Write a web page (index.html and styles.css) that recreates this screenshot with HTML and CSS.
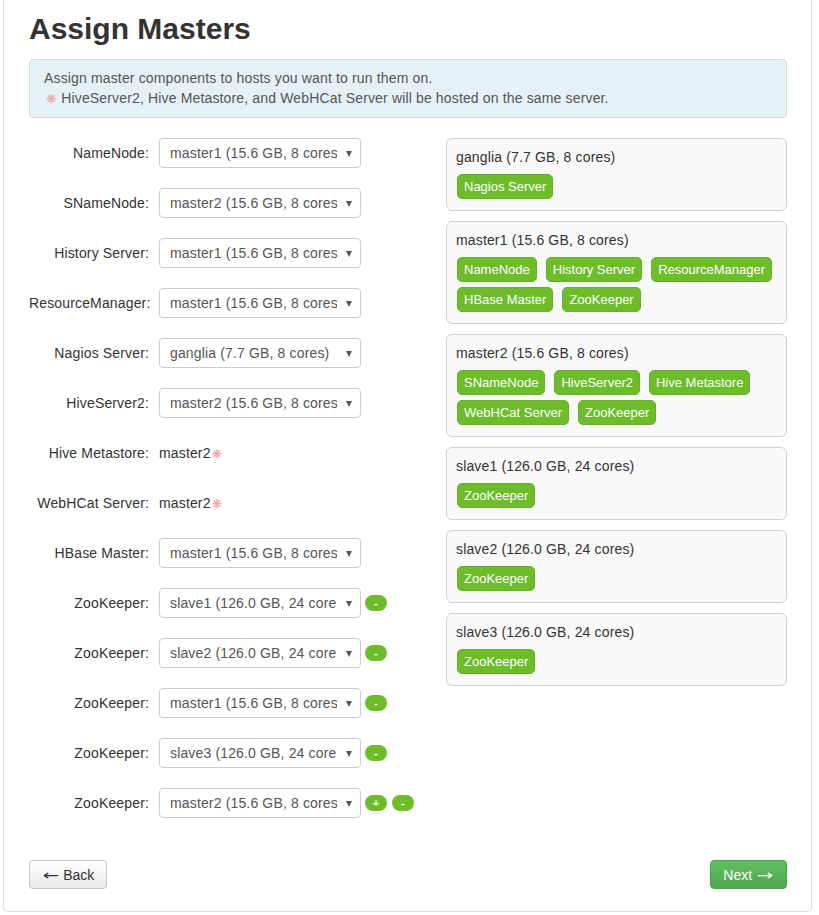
FILE: index.html
```html
<!DOCTYPE html>
<html>
<head>
<meta charset="utf-8">
<title>Assign Masters</title>
<link rel="stylesheet" href="styles.css">
</head>
<body>
<div class="panel">
  <h1 class="title">Assign Masters</h1>
  <div class="alert">
    <div>Assign master components to hosts you want to run them on.</div>
    <div><span class="star">❋</span> HiveServer2, Hive Metastore, and WebHCat Server will be hosted on the same server.</div>
  </div>

  <div class="layout">
    <div class="form">
      <div class="row"><div class="label">NameNode:</div><div class="select"><span class="select-text">master1 (15.6 GB, 8 cores)</span></div></div>
      <div class="row"><div class="label">SNameNode:</div><div class="select"><span class="select-text">master2 (15.6 GB, 8 cores)</span></div></div>
      <div class="row"><div class="label">History Server:</div><div class="select"><span class="select-text">master1 (15.6 GB, 8 cores)</span></div></div>
      <div class="row"><div class="label">ResourceManager:</div><div class="select"><span class="select-text">master1 (15.6 GB, 8 cores)</span></div></div>
      <div class="row"><div class="label">Nagios Server:</div><div class="select"><span class="select-text">ganglia (7.7 GB, 8 cores)</span></div></div>
      <div class="row"><div class="label">HiveServer2:</div><div class="select"><span class="select-text">master2 (15.6 GB, 8 cores)</span></div></div>
      <div class="row"><div class="label">Hive Metastore:</div><div class="static">master2<span class="star">❋</span></div></div>
      <div class="row"><div class="label">WebHCat Server:</div><div class="static">master2<span class="star">❋</span></div></div>
      <div class="row"><div class="label">HBase Master:</div><div class="select"><span class="select-text">master1 (15.6 GB, 8 cores)</span></div></div>
      <div class="row"><div class="label">ZooKeeper:</div><div class="select"><span class="select-text">slave1 (126.0 GB, 24 cores)</span></div><span class="pill">-</span></div>
      <div class="row"><div class="label">ZooKeeper:</div><div class="select"><span class="select-text">slave2 (126.0 GB, 24 cores)</span></div><span class="pill">-</span></div>
      <div class="row"><div class="label">ZooKeeper:</div><div class="select"><span class="select-text">master1 (15.6 GB, 8 cores)</span></div><span class="pill">-</span></div>
      <div class="row"><div class="label">ZooKeeper:</div><div class="select"><span class="select-text">slave3 (126.0 GB, 24 cores)</span></div><span class="pill">-</span></div>
      <div class="row"><div class="label">ZooKeeper:</div><div class="select"><span class="select-text">master2 (15.6 GB, 8 cores)</span></div><span class="pill">+</span><span class="pill">-</span></div>
    </div>

    <div class="hosts">
      <div class="host">
        <div class="host-name">ganglia (7.7 GB, 8 cores)</div>
        <div class="badges"><span class="badge">Nagios Server</span></div>
      </div>
      <div class="host">
        <div class="host-name">master1 (15.6 GB, 8 cores)</div>
        <div class="badges"><span class="badge">NameNode</span><span class="badge">History Server</span><span class="badge">ResourceManager</span><span class="badge">HBase Master</span><span class="badge">ZooKeeper</span></div>
      </div>
      <div class="host">
        <div class="host-name">master2 (15.6 GB, 8 cores)</div>
        <div class="badges"><span class="badge">SNameNode</span><span class="badge">HiveServer2</span><span class="badge">Hive Metastore</span><span class="badge">WebHCat Server</span><span class="badge">ZooKeeper</span></div>
      </div>
      <div class="host">
        <div class="host-name">slave1 (126.0 GB, 24 cores)</div>
        <div class="badges"><span class="badge">ZooKeeper</span></div>
      </div>
      <div class="host">
        <div class="host-name">slave2 (126.0 GB, 24 cores)</div>
        <div class="badges"><span class="badge">ZooKeeper</span></div>
      </div>
      <div class="host">
        <div class="host-name">slave3 (126.0 GB, 24 cores)</div>
        <div class="badges"><span class="badge">ZooKeeper</span></div>
      </div>
    </div>
  </div>

  <div class="actions">
    <button class="btn btn-back"><span class="arrow">←</span> Back</button>
    <button class="btn btn-success">Next <span class="arrow">→</span></button>
  </div>
</div>
</body>
</html>
```
FILE: styles.css
```css
* { box-sizing: border-box; }
html, body { margin: 0; padding: 0; background: #fff; }
body {
  font-family: "Liberation Sans", Arial, sans-serif;
  font-size: 14px;
  line-height: 20px;
  letter-spacing: 0.15px;
  color: #333;
}
.panel {
  margin-left: 3px;
  width: 809px;
  border: 1px solid #dcdcdc;
  border-top: none;
  border-radius: 0 0 5px 5px;
  padding: 11px 24px 22px 25px;
}
.title {
  margin: 0 0 12px;
  font-size: 30px;
  line-height: 36px;
  font-weight: bold;
  letter-spacing: 0;
  color: #333;
}
.alert {
  background: #e6f1f6;
  border: 1px solid #cfdce2;
  border-radius: 4px;
  padding: 8px 14px;
  color: #555;
}
.star {
  color: #f39a9a;
  font-family: "DejaVu Sans", sans-serif;
  font-size: 12px;
  margin-left: 1px;
}
.alert .star { margin-left: 2px; margin-right: 1px; }
.layout {
  margin-top: 20px;
  display: grid;
  grid-template-columns: 387px 341px;
  column-gap: 30px;
  align-items: start;
}
.form {
  display: flex;
  flex-direction: column;
  gap: 20px;
}
.row {
  display: flex;
  align-items: center;
  height: 30px;
}
.label {
  width: 120px;
  text-align: right;
  margin-right: 10px;
  color: #333;
  white-space: nowrap;
}
.select {
  position: relative;
  width: 202px;
  height: 30px;
  border: 1px solid #ccc;
  border-radius: 4px;
  background: #fff;
  padding: 4px 23px 4px 10px;
  color: #555;
}
.select-text {
  display: block;
  overflow: hidden;
  white-space: nowrap;
}
.select::after {
  content: "";
  position: absolute;
  right: 8px;
  top: 12px;
  border-left: 3.5px solid transparent;
  border-right: 3.5px solid transparent;
  border-top: 6px solid #555;
}
.static {
  color: #333;
}
.pill {
  display: inline-flex;
  align-items: center;
  justify-content: center;
  margin-left: 4px;
  width: 22px;
  height: 16px;
  border-radius: 8px;
  background: #6dbd2b;
  color: #fff;
  font-size: 11px;
  font-weight: bold;
  line-height: 16px;
}
.pill + .pill { margin-left: 5px; }
.hosts {
  display: flex;
  flex-direction: column;
  gap: 10px;
}
.host {
  background: #f9f9f9;
  border: 1px solid #cfcfcf;
  border-radius: 6px;
  padding: 8px 9px 11px 10px;
}
.host-name {
  margin-left: -1px;
  color: #333;
}
.badges {
  margin-top: 7px;
  display: flex;
  flex-wrap: wrap;
  gap: 5px 9px;
}
.badge {
  display: inline-block;
  height: 25px;
  line-height: 23px;
  padding: 0 6px;
  background: #6dbd2b;
  border: 1px solid #64b026;
  border-radius: 5px;
  color: #fff;
  font-size: 13px;
  letter-spacing: 0;
}
.actions {
  margin-top: 42px;
  display: flex;
  justify-content: space-between;
}
.btn {
  font-family: "Liberation Sans", Arial, sans-serif;
  font-size: 14px;
  line-height: 20px;
  height: 29px;
  width: 78px;
  padding: 3px 0;
  text-align: center;
  border: 1px solid #c8c8c8;
  border-radius: 4px;
  background: linear-gradient(#ffffff, #e8e8e8);
  color: #333;
}
.arrow {
  display: inline-block;
  font-family: "DejaVu Sans", sans-serif;
  font-size: 14px;
  transform: scaleX(1.4);
  margin: 0 3px;
}
.btn-success {
  width: 77px;
  color: #fff;
  border-color: #4aa04a;
  background: linear-gradient(#60c060, #4fa64f);
}
```
